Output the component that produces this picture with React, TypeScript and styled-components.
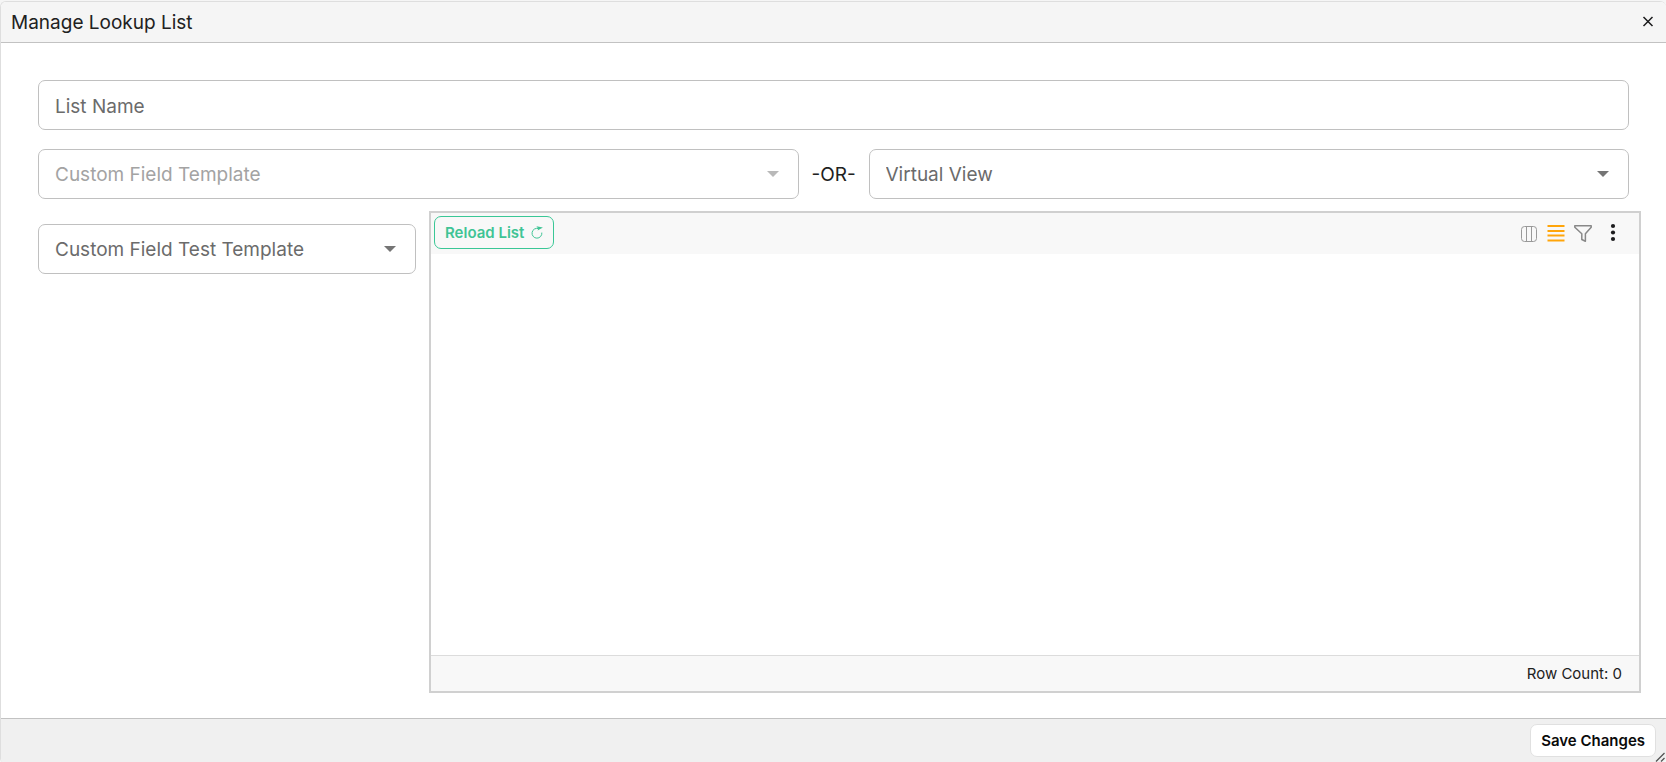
import React, { useId } from "react";
import styled, { createGlobalStyle } from "styled-components";

const GlobalStyle = createGlobalStyle`
  *, *::before, *::after { box-sizing: border-box; }
  body {
    margin: 0;
    background: #f5f5f5;
    font-family: Inter, "Liberation Sans", sans-serif;
    color: #212121;
  }
  button, input, select { font-family: inherit; }
`;

const Dialog = styled.div`
  position: relative;
  display: flex;
  flex-direction: column;
  min-height: 100vh;
  padding-top: 1px;
`;

const Frame = styled.section`
  flex: 1;
  display: flex;
  flex-direction: column;
  border: 1px solid #dedede;
  border-width: 1px 0 0 1px;
  border-radius: 6px 6px 4px 4px;
  background: #fff;
  overflow: hidden;
`;

const Header = styled.header`
  display: flex;
  align-items: center;
  justify-content: space-between;
  height: 41px;
  padding: 0 9px 0 10px;
  background: #f5f5f5;
  border-bottom: 1px solid #c2c2c2;
`;

const Title = styled.h1`
  margin: 0;
  padding-top: 2px;
  font-size: 19px;
  line-height: 24px;
  font-weight: 400;
`;

const IconButton = styled.button<{ $tone?: string }>`
  display: flex;
  align-items: center;
  justify-content: center;
  padding: 0;
  border: 0;
  background: none;
  color: ${(p) => p.$tone ?? "#1c1c1e"};
  cursor: pointer;
`;

const Body = styled.main`
  flex: 1;
  display: flex;
  flex-direction: column;
  padding: 37px 25px 25px 24px;
`;

const FieldRow = styled.div`
  display: flex;
  align-items: center;
  gap: 13px;
  padding: 0 12px 0 13px;
  margin-bottom: 19px;

  & + & { margin-bottom: 12px; }
`;

const Or = styled.span`
  width: 44px;
  padding-top: 2px;
  font-size: 19px;
  line-height: 24px;
  text-align: center;
  white-space: nowrap;
`;

const FieldBox = styled.div`
  position: relative;
  flex: 1;
  min-width: 0;
  color: #757575;
`;

const controlStyle = `
  display: block;
  width: 100%;
  height: 50px;
  padding: 2px 16px 0;
  border: 1px solid #c0c0c0;
  border-radius: 7px;
  background: #fff;
  color: #6b6b6b;
  font-size: 19px;
  line-height: 24px;
`;

const TextInput = styled.input`
  ${controlStyle}
  &::placeholder { color: #6b6b6b; opacity: 1; }
`;

const Select = styled.select`
  ${controlStyle}
  appearance: none;
  &:disabled { color: #a3a3a3; opacity: 1; }
`;

const Arrow = styled.svg<{ $muted?: boolean }>`
  position: absolute;
  right: 20px;
  top: 22px;
  pointer-events: none;
  opacity: ${(p) => (p.$muted ? 0.5 : 1)};
`;

const Content = styled.div`
  flex: 1;
  display: grid;
  grid-template-columns: 25% 75%;
`;

const Side = styled.aside`
  padding: 13px 13px 0;
`;

const Panel = styled.section`
  display: flex;
  flex-direction: column;
  border: 2px solid #d0d0d0;
`;

const Toolbar = styled.div`
  display: flex;
  align-items: center;
  justify-content: space-between;
  height: 41px;
  padding: 0 17px 2px 3px;
  background: #f8f8f8;
`;

const Button = styled.button<{ $variant: "outline" | "plain" }>`
  display: flex;
  align-items: center;
  justify-content: center;
  gap: 7px;
  height: 33px;
  padding: 0 10px;
  border: 1px solid ${(p) => (p.$variant === "outline" ? "#3ac796" : "#e0e0e0")};
  border-radius: 7px;
  background: ${(p) => (p.$variant === "outline" ? "transparent" : "#fff")};
  color: ${(p) => (p.$variant === "outline" ? "#3fc495" : "#0a0a0a")};
  font-size: 15px;
  line-height: 20px;
  font-weight: 600;
  white-space: nowrap;
  cursor: pointer;
`;

const Tools = styled.div`
  display: flex;
  align-items: center;
  gap: 9px;

  button:last-child { margin-left: 3px; }
`;

const Rows = styled.div`
  flex: 1;
`;

const PanelFooter = styled.div`
  display: flex;
  align-items: center;
  justify-content: flex-end;
  height: 36px;
  padding: 0 17px;
  border-top: 1px solid #dcdcdc;
  background: #f8f8f8;
  font-size: 15px;
  line-height: 20px;
`;

const Footer = styled.footer`
  display: flex;
  align-items: center;
  justify-content: flex-end;
  height: 44px;
  padding: 0 10px;
  border-top: 1px solid #c2c2c2;
  background: #f0f0f0;
`;

const ResizeGrip = styled.svg`
  position: absolute;
  right: 0;
  bottom: 0;
`;

function SelectField({ label, disabled }: { label: string; disabled?: boolean }) {
  const id = useId();
  return (
    <FieldBox>
      <Select id={id} aria-label={label} disabled={disabled} defaultValue="">
        <option value="">{label}</option>
      </Select>
      <Arrow $muted={disabled} width="12" height="6" viewBox="0 0 12 6" aria-hidden="true">
        <path d="M0 0h12L6 6z" fill="currentColor" />
      </Arrow>
    </FieldBox>
  );
}

export default function App() {
  return (
    <>
      <GlobalStyle />
      <Dialog role="dialog" aria-labelledby="dialog-title">
        <Frame>
          <Header>
            <Title id="dialog-title">Manage Lookup List</Title>
            <IconButton aria-label="Close">
              <svg width="18" height="18" viewBox="0 0 18 18" fill="none" stroke="currentColor" strokeWidth="1.5">
                <path d="M4.5 4l9 9M13.5 4l-9 9" />
              </svg>
            </IconButton>
          </Header>
          <Body>
            <FieldRow>
              <FieldBox>
                <TextInput type="text" aria-label="List Name" placeholder="List Name" />
              </FieldBox>
            </FieldRow>
            <FieldRow>
              <SelectField label="Custom Field Template" disabled />
              <Or>-OR-</Or>
              <SelectField label="Virtual View" />
            </FieldRow>
            <Content>
              <Side>
                <SelectField label="Custom Field Test Template" />
              </Side>
              <Panel>
                <Toolbar>
                  <Button $variant="outline">
                    Reload List
                    <svg width="12" height="13" viewBox="0 0 12 13" fill="none" stroke="currentColor" aria-hidden="true">
                      <path d="M7.5 2.6A4.9 4.9 0 1 0 10.8 6.6" />
                      <path d="M5.4 0.3L11.9 1.5 6.6 4.6 7.2 2.4z" fill="currentColor" stroke="none" />
                    </svg>
                  </Button>
                  <Tools>
                    <IconButton $tone="#999" aria-label="Columns">
                      <svg width="18" height="18" viewBox="0 0 18 18" fill="none" stroke="currentColor">
                        <rect x="1.5" y="2.5" width="15" height="15" rx="3" />
                        <path d="M6.5 2.5v15M11.5 2.5v15" />
                      </svg>
                    </IconButton>
                    <IconButton $tone="#ffa50a" aria-label="Density">
                      <svg width="18" height="18" viewBox="0 0 18 18" stroke="currentColor" strokeWidth="2">
                        <path d="M0.5 2h17M0.5 7h17M0.5 11.5h17M0.5 16.5h17" />
                      </svg>
                    </IconButton>
                    <IconButton $tone="#888" aria-label="Filter">
                      <svg width="18" height="18" viewBox="0 0 18 18" fill="none" stroke="currentColor" strokeWidth="1.5" strokeLinejoin="round">
                        <path d="M0.8 1.8h16.4v1.4l-5.8 6.6v7.4l-3.6-1.7V9.8L0.8 3.2z" />
                      </svg>
                    </IconButton>
                    <IconButton aria-label="More options">
                      <svg width="18" height="20" viewBox="0 0 18 20" fill="currentColor">
                        <circle cx="9" cy="3" r="2.1" />
                        <circle cx="9" cy="9.5" r="2.1" />
                        <circle cx="9" cy="16" r="2.1" />
                      </svg>
                    </IconButton>
                  </Tools>
                </Toolbar>
                <Rows />
                <PanelFooter>Row Count: 0</PanelFooter>
              </Panel>
            </Content>
          </Body>
          <Footer>
            <Button $variant="plain">Save Changes</Button>
          </Footer>
        </Frame>
        <ResizeGrip width="11" height="10" viewBox="0 0 11 10" stroke="#555" strokeWidth="1.3" aria-hidden="true">
          <path d="M1 9.5L9.5 1M6 9.5L9.5 6" />
        </ResizeGrip>
      </Dialog>
    </>
  );
}
